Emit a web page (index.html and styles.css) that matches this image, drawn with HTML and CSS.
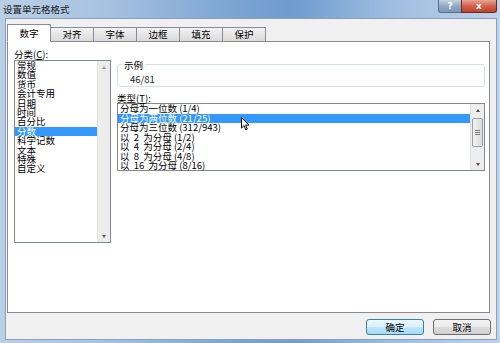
FILE: index.html
```html
<!DOCTYPE html>
<html lang="zh">
<head>
<meta charset="utf-8">
<title>设置单元格格式</title>
<link rel="stylesheet" href="styles.css">
</head>
<body>
<div class="window">
  <div class="titlebar">
    <span class="title">设置单元格格式</span>
    <div class="caption-buttons">
      <span class="cap-btn help">?</span>
      <span class="cap-btn close">x</span>
    </div>
  </div>
  <div class="client">
    <div class="tabs">
      <span class="tab active">数字</span>
      <span class="tab">对齐</span>
      <span class="tab">字体</span>
      <span class="tab">边框</span>
      <span class="tab">填充</span>
      <span class="tab">保护</span>
    </div>
    <div class="panel">
      <div class="col-left">
        <div class="label">分类(<u>C</u>):</div>
        <div class="listbox cat-list">
          <div class="items">
            <div class="item">常规</div>
            <div class="item">数值</div>
            <div class="item">货币</div>
            <div class="item">会计专用</div>
            <div class="item">日期</div>
            <div class="item">时间</div>
            <div class="item">百分比</div>
            <div class="item sel">分数</div>
            <div class="item">科学记数</div>
            <div class="item">文本</div>
            <div class="item">特殊</div>
            <div class="item">自定义</div>
          </div>
          <div class="vscroll disabled">
            <span class="arrow up"></span>
            <span class="track"></span>
            <span class="arrow down"></span>
          </div>
        </div>
      </div>
      <div class="col-right">
        <div class="group">
          <span class="legend">示例</span>
          <div class="sample">46/81</div>
        </div>
        <div class="label type-label">类型(<u>T</u>):</div>
        <div class="listbox type-list">
          <div class="items">
            <div class="item">分母为一位数 (1/4)</div>
            <div class="item sel">分母为两位数 (21/25)</div>
            <div class="item">分母为三位数 (312/943)</div>
            <div class="item">以  2  为分母 (1/2)</div>
            <div class="item">以  4  为分母 (2/4)</div>
            <div class="item">以  8  为分母 (4/8)</div>
            <div class="item">以  16  为分母 (8/16)</div>
          </div>
          <div class="vscroll">
            <span class="arrow up"></span>
            <span class="track"><span class="thumb"><i></i><i></i><i></i></span></span>
            <span class="arrow down"></span>
          </div>
        </div>
      </div>
    </div>
    <div class="footer">
      <span class="btn default">确定</span>
      <span class="btn">取消</span>
    </div>
  </div>
  <svg class="cursor" width="9" height="14" viewBox="0 0 9 14">
    <path d="M0.5 0.5 L0.5 11 L3 8.6 L4.8 12.8 L6.3 12.1 L4.6 8.1 L8 8.1 Z" fill="#fff" stroke="#000" stroke-width="1"/>
  </svg>
</div>
</body>
</html>
```
FILE: styles.css
```css
* { box-sizing: border-box; }
html, body { margin: 0; padding: 0; }
body {
  width: 500px;
  height: 343px;
  overflow: hidden;
  font-family: "Noto Sans CJK SC", "DejaVu Sans", sans-serif;
  font-size: 9.5px;
  color: #000;
}
.window {
  position: relative;
  width: 500px;
  height: 343px;
  display: flex;
  flex-direction: column;
  background: linear-gradient(to right, #b9cfe6 0%, #a8c3e1 20%, #7ea6d4 45%, #6f9bcf 58%, #9dbde0 78%, #bfd3ea 100%);
}
.titlebar {
  height: 18px;
  display: flex;
  align-items: flex-start;
  justify-content: space-between;
  padding-left: 3px;
}
.title {
  line-height: 18px;
  font-size: 9.5px;
  color: #1b1b1b;
}
.caption-buttons {
  display: flex;
  margin-right: 3px;
}
.cap-btn {
  height: 13px;
  display: flex;
  align-items: center;
  justify-content: center;
  color: #fff;
  font-family: "DejaVu Sans", sans-serif;
  font-weight: bold;
  border: 1px solid #5b6f87;
  border-top: none;
}
.help {
  width: 23px;
  font-size: 9px;
  background: linear-gradient(#c4d3e3, #91a8c4 50%, #7d97b8);
  border-radius: 0 0 0 3px;
  border-right: none;
}
.close {
  width: 36px;
  font-size: 9px;
  background: linear-gradient(#e8a593, #d0624b 50%, #c0412c);
  border-color: #6b2b22;
  border-radius: 0 0 3px 0;
}
.client {
  flex: 1;
  margin: 0 3px 3px 5px;
  background: #f0f0f0;
  border: 1px solid #8ba0b8;
  display: flex;
  flex-direction: column;
}
.tabs {
  height: 22px;
  display: flex;
  align-items: flex-end;
  padding-left: 1px;
  position: relative;
  z-index: 1;
}
.tab {
  width: 43px;
  height: 15px;
  margin-bottom: -1px;
  display: flex;
  align-items: center;
  justify-content: center;
  border: 1px solid #898c95;
  border-left: none;
  background: linear-gradient(#f3f3f3, #e6e6e6 50%, #dadada);
  line-height: 10px;
  padding-bottom: 1px;
}
.tab.active {
  width: 44px;
  height: 18px;
  border-left: 1px solid #898c95;
  border-bottom-color: #fff;
  background: #fff;
}
.panel {
  height: 272px;
  margin: 0 6px 0 1px;
  background: #fff;
  border: 1px solid #898c95;
  display: grid;
  grid-template-columns: 97px 368px;
  column-gap: 6px;
  padding: 6px 0 0 6px;
  align-content: start;
}
.label {
  height: 12px;
  line-height: 10px;
  padding-top: 1px;
}
.listbox {
  display: flex;
  border: 1px solid #828790;
  background: #fff;
}
.cat-list { height: 183px; }
.items {
  flex: 1;
  display: flex;
  flex-direction: column;
}
.item {
  height: 9.4px;
  line-height: 9.4px;
  padding-left: 2px;
  white-space: pre;
}
.item.sel {
  background: #3399ff;
  color: #fff;
}
.vscroll {
  width: 13px;
  display: flex;
  flex-direction: column;
  background: #ededed;
  border-left: 1px solid #e3e3e3;
}
.arrow {
  height: 12px;
  display: flex;
  align-items: center;
  justify-content: center;
}
.arrow::before {
  content: "";
  width: 0;
  height: 0;
  border-left: 2.5px solid transparent;
  border-right: 2.5px solid transparent;
}
.arrow.up::before { border-bottom: 3px solid #4d4d4d; }
.arrow.down::before { border-top: 3px solid #4d4d4d; }
.disabled .arrow.up::before { border-bottom-color: #9a9a9a; }
.disabled .arrow.down::before { border-top-color: #606060; }
.track {
  flex: 1;
  display: flex;
  flex-direction: column;
}
.thumb {
  height: 29px;
  margin: 2px 1px 0 1px;
  border: 1px solid #9aa0a8;
  border-radius: 2px;
  background: linear-gradient(to right, #f2f2f2, #dcdcdc);
  display: flex;
  flex-direction: column;
  align-items: center;
  justify-content: center;
  gap: 1px;
}
.thumb i {
  display: block;
  width: 5px;
  height: 1px;
  background: #777;
}
.group {
  margin-top: 16px;
  height: 23px;
  border: 1px solid #d5dfe5;
  border-radius: 3px;
  display: flex;
  flex-direction: column;
  align-items: flex-start;
}
.legend {
  margin: -5px 0 0 4px;
  padding: 0 2px;
  background: #fff;
  line-height: 10px;
}
.sample {
  margin: 4px 0 0 12px;
  line-height: 10px;
  color: #222;
}
.type-label {
  margin-top: 3px;
  height: 13px;
  padding-top: 3px;
}
.type-list { height: 68px; }
.type-list .item { height: 9.5px; line-height: 9.5px; }
.type-list .vscroll { width: 14px; }
.footer {
  flex: 1;
  display: flex;
  justify-content: flex-end;
  align-items: flex-start;
  padding: 6px 5px 0 0;
  gap: 9px;
}
.btn {
  width: 58px;
  height: 16px;
  display: flex;
  align-items: center;
  justify-content: center;
  border: 1px solid #707070;
  border-radius: 3px;
  background: linear-gradient(#f2f2f2, #ebebeb 50%, #dddddd 51%, #cfcfcf);
  line-height: 10px;
}
.btn.default {
  border-color: #3c7fb1;
  background: linear-gradient(#eaf6fd, #d9f0fc 50%, #bee6fd 51%, #a7d9f5);
}
.cursor {
  position: absolute;
  left: 241px;
  top: 117px;
}
```
